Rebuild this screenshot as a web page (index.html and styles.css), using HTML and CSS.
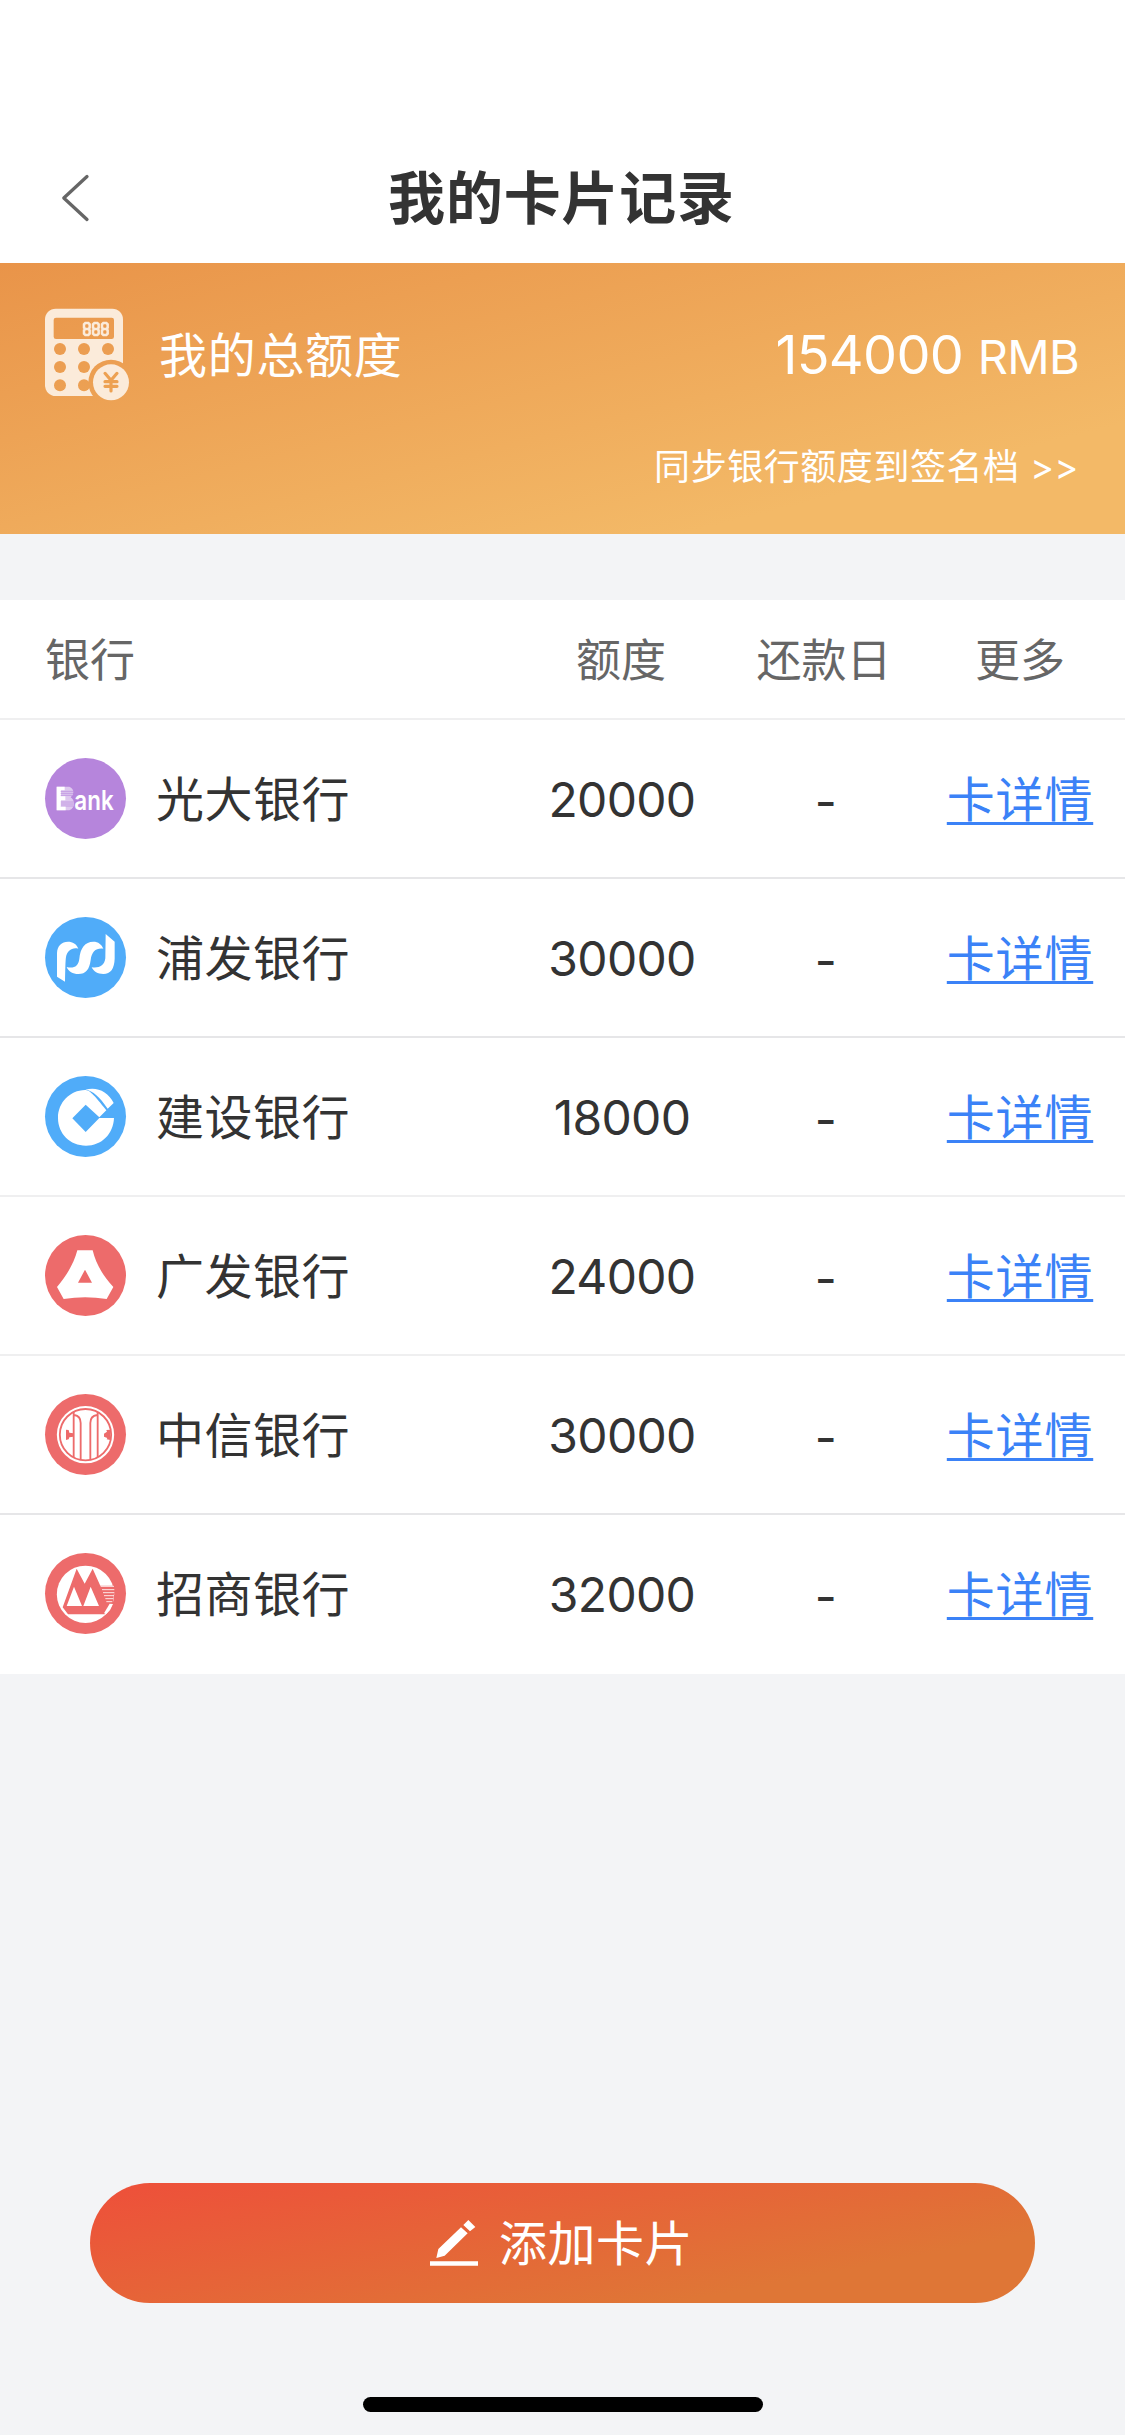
FILE: index.html
```html
<!DOCTYPE html>
<html lang="zh-CN">
<head>
<meta charset="utf-8">
<title>我的卡片记录</title>
<link rel="stylesheet" href="styles.css">
</head>
<body>
<div class="screen">
  <header class="navbar">
    <button class="back" aria-label="返回">
      <svg width="30" height="50" viewBox="0 0 30 50"><path d="M27 3.5 3.8 25 27 46.500" fill="none" stroke="#666" stroke-width="3.300" stroke-linecap="round" stroke-linejoin="round"/></svg>
    </button>
    <h1 class="title">我的卡片记录</h1>
  </header>

  <section class="summary">
    <div class="summary-main">
      <svg class="calc" viewBox="45 54 255 279">
        <defs>
          <mask id="badge-cut">
            <rect x="0" y="0" width="360" height="390" fill="#fff"/>
            <circle cx="243" cy="277" r="68" fill="#000"/>
            <rect x="71" y="83" width="181" height="64" rx="7" fill="#000"/>
            <g fill="#000">
              <circle cx="90" cy="177" r="18"/><circle cx="162" cy="177" r="18"/><circle cx="234" cy="177" r="18"/>
              <circle cx="90" cy="231" r="18"/><circle cx="162" cy="231" r="18"/>
              <circle cx="90" cy="286" r="18"/><circle cx="162" cy="286" r="18"/>
            </g>
          </mask>
        </defs>
        <rect x="45" y="56" width="234" height="262" rx="32" fill="#fbebda" mask="url(#badge-cut)"/>
        <g fill="none" stroke="#fbebda" stroke-width="7.500">
          <path id="seg" d="M166 99h9l4 4v10l-4 4h-9l-4-4v-10zM166 117h9l4 4v10l-4 4h-9l-4-4v-10z"/>
          <use href="#seg" x="27"/><use href="#seg" x="54"/>
        </g>
        <circle cx="243" cy="277" r="54" fill="#fbebda"/>
        <path d="M225 250l18 21 18-21M243 271v32M225 275h36M225 289h36" fill="none" stroke="#eda152" stroke-width="9.500" stroke-linecap="round"/>
      </svg>
      <span class="summary-label">我的总额度</span>
      <span class="total">154000 <small>RMB</small></span>
    </div>
    <a class="sync">同步银行额度到签名档 &gt;&gt;</a>
  </section>

  <main class="cards">
    <div class="row head"><span>银行</span><span>额度</span><span class="due">还款日</span><span>更多</span></div>

    <div class="row">
      <div class="bank">
        <svg class="logo" viewBox="45 57 243 243">
          <circle cx="166.500" cy="178.500" r="121.500" fill="#b685dc"/>
          <path d="M80 143h38q12 5 12 17 0 10-8 15 10 7 10 19 0 13-14 20H80z" fill="#fff" opacity=".55"/>
          <path d="M80 143h24v11H93v18h13v12H93v18h14v12H80z" fill="#fff"/>
          <path d="M92 157h38M92 163h38M92 169h35M92 189h39M92 195h39M92 201h38" stroke="#b685dc" stroke-width="2"/>
          <text class="logo-text" x="133" y="213" textLength="118" lengthAdjust="spacingAndGlyphs">ank</text>
        </svg>
        <span class="name">光大银行</span>
      </div>
      <span class="num">20000</span><span class="num dash">-</span><a class="more">卡详情</a>
    </div>

    <div class="row">
      <div class="bank">
        <svg class="logo" viewBox="45 532 243 243">
          <circle cx="166.500" cy="653.500" r="121.500" fill="#50acf9"/>
          <g fill="#fff">
            <path d="M81 711V640C82 618 95 606 114 606 128 606 139 612 145 627 126 622 111 634 108 652 106 665 106 690 105 726Z"/>
            <path d="M110 682C132 687 145 680 148 657 151 625 165 606 190 606 205 606 215 614 220 627 199 624 185 635 182 661 178 690 168 703 145 703 128 703 116 696 110 682Z"/>
            <path d="M227 583 254 606V657C253 687 242 703 220 703 203 703 191 696 185 683 207 686 223 679 226 656Z"/>
          </g>
        </svg>
        <span class="name">浦发银行</span>
      </div>
      <span class="num">30000</span><span class="num dash">-</span><a class="more">卡详情</a>
    </div>

    <div class="row light">
      <div class="bank">
        <svg class="logo" viewBox="45 49 243 243">
          <circle cx="166.500" cy="170.500" r="121.500" fill="#50acf9"/>
          <path d="M165 91C178 91 190 102 229 152L208 173 167 135 127 176 167 217 208 175H252C250 223 215 258 168 258 120 258 84 222 84 175 84 128 120 92 165 91Z" fill="#fff"/>
          <path d="M166 90C200 80 234 95 251 130L233 147C208 111 190 93 166 90Z" fill="#fff"/>
        </svg>
        <span class="name">建设银行</span>
      </div>
      <span class="num">18000</span><span class="num dash">-</span><a class="more">卡详情</a>
    </div>

    <div class="row light">
      <div class="bank">
        <svg class="logo" viewBox="45 527 243 243">
          <circle cx="166.500" cy="648.500" r="121.500" fill="#ed6b6b"/>
          <path d="M142 573H188C197 611 217 648 250 683L230 719Q165 708 101 719L81 683C111 648 132 611 142 573ZM165 631 144 670H186Z" fill="#fff" fill-rule="evenodd"/>
        </svg>
        <span class="name">广发银行</span>
      </div>
      <span class="num">24000</span><span class="num dash">-</span><a class="more">卡详情</a>
    </div>

    <div class="row">
      <div class="bank">
        <svg class="logo" viewBox="45 43 243 243">
          <circle cx="166.500" cy="164.500" r="121.500" fill="#ed6b6b"/>
          <circle cx="166.500" cy="165" r="86" fill="#fff"/>
          <g fill="none" stroke="#ed6b6b" stroke-width="5.500">
            <circle cx="166.500" cy="165" r="77"/>
            <path d="M131 97V232M203 97V232M133 106C146 108 152 116 152 130V240M201 106C187 108 181 116 181 130V240"/>
          </g>
          <path d="M108 150 116 151 118 159 130 161V171L118 173 116 179 108 181ZM241 150 229 151 231 156 222 162V171L232 175 230 179 241 181Z" fill="#ed6b6b"/>
        </svg>
        <span class="name">中信银行</span>
      </div>
      <span class="num">30000</span><span class="num dash">-</span><a class="more">卡详情</a>
    </div>

    <div class="row">
      <div class="bank">
        <svg class="logo" viewBox="45 519 243 243">
          <circle cx="166.500" cy="640.500" r="121.500" fill="#ed6b6b"/>
          <circle cx="166.500" cy="643" r="86" fill="#fff"/>
          <path d="M140 566 164 611 188 566 211 617H254L249 672 224 703H114L98 682Z" fill="#ed6b6b"/>
          <path d="M132 620 110 678H156ZM182 620 160 678H207Z" fill="#fff"/>
          <path d="M212 619H252M216 629H253M219 638H253M222 647H252M226 656H250M229 665H247" stroke="#fff" stroke-width="2.500"/>
          <path d="M239 671 249 672Q243 690 229 702L222 700Z" fill="#fff"/>
        </svg>
        <span class="name">招商银行</span>
      </div>
      <span class="num">32000</span><span class="num dash">-</span><a class="more">卡详情</a>
    </div>
  </main>

  <footer class="footer">
    <button class="add">
      <svg class="pen" viewBox="90 120 144 144" fill="#fff">
        <path d="M90 247H234V260H90ZM183 145 203 163 134 230 109 237 115 210ZM190 138 205 123 226 144 210 157Z"/>
      </svg>
      <span class="add-label">添加卡片</span>
    </button>
    <div class="home-bar"></div>
  </footer>
</div>
</body>
</html>
```

FILE: styles.css
```css
* {
  box-sizing: border-box;
}

body {
  margin: 0;
  background: #f3f4f6;
  color: #333;
  font-family: Inter, "Noto Sans CJK SC", sans-serif;
}

button {
  border: 0;
  padding: 0;
  background: none;
  font: inherit;
}

svg {
  display: block;
}

.screen {
  display: flex;
  flex-direction: column;
  width: 1125px;
  height: 2435px;
}

.navbar {
  display: grid;
  grid-template-columns: 119px 1fr 121px;
  align-items: center;
  height: 263px;
  padding-top: 132px;
  background: #fff;
}

.back {
  padding-left: 60px;
}

.title {
  margin: 0;
  padding-top: 2px;
  font-size: 57px;
  font-weight: 600;
  line-height: 80px;
  letter-spacing: 0.800px;
  text-align: center;
}

.summary {
  display: flex;
  flex-direction: column;
  align-items: flex-end;
  height: 271px;
  padding: 45px 46px 0 45px;
  background: linear-gradient(166deg, #e99449, #f3b967 80%);
  color: #fff;
}

.summary-main {
  display: flex;
  align-items: center;
  width: 100%;
  height: 93px;
}

.calc {
  width: 85px;
  height: 93px;
}

.summary-label {
  margin-left: 29px;
  padding-bottom: 6px;
  font-size: 48px;
  letter-spacing: 0.700px;
}

.total {
  margin-left: auto;
  font-size: 54px;
  letter-spacing: -0.700px;
}

.total small {
  font-size: 47px;
}

.sync {
  margin-top: 41px;
  font-size: 36px;
  line-height: 50px;
  letter-spacing: 0.550px;
}

.cards {
  margin-top: 66px;
  background: #fff;
}

.row {
  display: grid;
  grid-template-columns: 466px 220px 184px 210px;
  align-items: center;
  height: 159px;
  padding-left: 45px;
  border-bottom: 2px solid #e6e6e8;
  font-size: 48px;
  text-align: center;
}

.row.light {
  border-bottom-color: #efeff0;
}

.row:last-child {
  border-bottom-color: #fff;
}

.head {
  height: 120px;
  padding-bottom: 4px;
  border-bottom-color: #efeff0;
  color: #666;
  font-size: 45px;
}

.head span:first-child {
  text-align: left;
}

.due {
  padding-left: 2px;
}

.bank {
  display: flex;
  align-items: center;
  gap: 30px;
  letter-spacing: 0.500px;
}

.name {
  padding-bottom: 6px;
}

.logo {
  width: 81px;
  height: 81px;
  overflow: visible;
}

.logo-text {
  fill: #fff;
  font: 600 82px Inter, sans-serif;
  letter-spacing: 0;
}

.num {
  padding: 2px 0 0 2px;
  letter-spacing: -0.700px;
}

.dash {
  padding: 5px 0 0 5px;
}

.more {
  padding-bottom: 5px;
  color: #3b82f7;
  letter-spacing: 0.800px;
  text-decoration: underline;
  text-decoration-thickness: 3px;
  text-underline-offset: 5px;
}

.footer {
  display: flex;
  flex-direction: column;
  align-items: center;
  justify-content: space-between;
  height: 252px;
  margin-top: auto;
  padding-bottom: 23px;
}

.add {
  display: flex;
  align-items: center;
  justify-content: center;
  gap: 21px;
  width: 945px;
  height: 120px;
  padding-right: 2px;
  border-radius: 60px;
  background: linear-gradient(169deg, #ee4f3a, #df7636 77%);
  color: #fff;
  font-size: 48px;
  letter-spacing: 0.500px;
}

.add-label {
  padding-bottom: 6px;
}

.pen {
  width: 48px;
  height: 48px;
}

.home-bar {
  width: 400px;
  height: 15px;
  border-radius: 8px;
  background: #000;
}
```
